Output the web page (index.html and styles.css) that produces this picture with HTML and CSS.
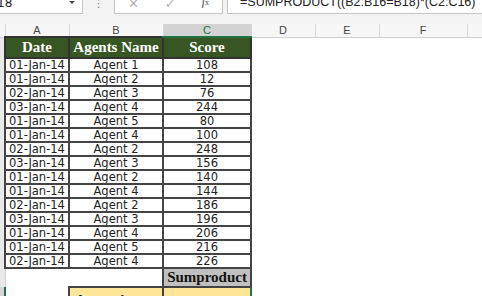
FILE: index.html
```html
<!DOCTYPE html>
<html lang="en">
<head>
  <meta charset="UTF-8">
  <title>Sumproduct</title>
  <link rel="stylesheet" href="styles.css">
</head>
<body>

  <!-- formula bar -->
  <div class="formula-bar">
    <div class="name-box">
      <span class="name-value">18</span>
      <span class="name-arrow"></span>
    </div>
    <div class="bar-dots">&#8942;</div>
    <div class="bar-buttons">
      <span class="btn-x">&#10005;</span>
      <span class="btn-ok">&#10003;</span>
      <span class="btn-fx"><i>f</i><small>x</small></span>
    </div>
    <div class="formula-input">=SUMPRODUCT((B2:B16=B18)*(C2:C16)</div>
  </div>
  <div class="bar-gap"></div>

  <table class="sheet">
    <colgroup>
      <col class="c-rh"><col class="c-a"><col class="c-b"><col class="c-c">
      <col class="c-d"><col class="c-e"><col class="c-f"><col class="c-g">
    </colgroup>
    <tr class="col-heads">
      <td class="rh"></td>
      <td>A</td><td>B</td><td class="col-sel">C</td>
      <td>D</td><td>E</td><td>F</td><td></td>
    </tr>
    <tr class="row-title">
      <td class="rh"></td>
      <td class="title">Date</td>
      <td class="title">Agents Name</td>
      <td class="title">Score</td>
      <td></td><td></td><td></td><td></td>
    </tr>
    <tr class="row-data"><td class="rh"></td><td class="d">01-Jan-14</td><td class="d m">Agent 1</td><td class="d m">108</td><td></td><td></td><td></td><td></td></tr>
    <tr class="row-data"><td class="rh"></td><td class="d">01-Jan-14</td><td class="d m">Agent 2</td><td class="d m">12</td><td></td><td></td><td></td><td></td></tr>
    <tr class="row-data"><td class="rh"></td><td class="d">02-Jan-14</td><td class="d m">Agent 3</td><td class="d m">76</td><td></td><td></td><td></td><td></td></tr>
    <tr class="row-data"><td class="rh"></td><td class="d">03-Jan-14</td><td class="d m">Agent 4</td><td class="d m">244</td><td></td><td></td><td></td><td></td></tr>
    <tr class="row-data"><td class="rh"></td><td class="d">01-Jan-14</td><td class="d m">Agent 5</td><td class="d m">80</td><td></td><td></td><td></td><td></td></tr>
    <tr class="row-data"><td class="rh"></td><td class="d">01-Jan-14</td><td class="d m">Agent 4</td><td class="d m">100</td><td></td><td></td><td></td><td></td></tr>
    <tr class="row-data"><td class="rh"></td><td class="d">02-Jan-14</td><td class="d m">Agent 2</td><td class="d m">248</td><td></td><td></td><td></td><td></td></tr>
    <tr class="row-data"><td class="rh"></td><td class="d">03-Jan-14</td><td class="d m">Agent 3</td><td class="d m">156</td><td></td><td></td><td></td><td></td></tr>
    <tr class="row-data"><td class="rh"></td><td class="d">01-Jan-14</td><td class="d m">Agent 2</td><td class="d m">140</td><td></td><td></td><td></td><td></td></tr>
    <tr class="row-data"><td class="rh"></td><td class="d">01-Jan-14</td><td class="d m">Agent 4</td><td class="d m">144</td><td></td><td></td><td></td><td></td></tr>
    <tr class="row-data"><td class="rh"></td><td class="d">02-Jan-14</td><td class="d m">Agent 2</td><td class="d m">186</td><td></td><td></td><td></td><td></td></tr>
    <tr class="row-data"><td class="rh"></td><td class="d">03-Jan-14</td><td class="d m">Agent 3</td><td class="d m">196</td><td></td><td></td><td></td><td></td></tr>
    <tr class="row-data"><td class="rh"></td><td class="d">01-Jan-14</td><td class="d m">Agent 4</td><td class="d m">206</td><td></td><td></td><td></td><td></td></tr>
    <tr class="row-data"><td class="rh"></td><td class="d">01-Jan-14</td><td class="d m">Agent 5</td><td class="d m">216</td><td></td><td></td><td></td><td></td></tr>
    <tr class="row-data"><td class="rh"></td><td class="d">02-Jan-14</td><td class="d m">Agent 4</td><td class="d m">226</td><td></td><td></td><td></td><td></td></tr>
    <tr class="row-sum">
      <td class="rh"></td><td></td><td></td>
      <td class="sum-label">Sumproduct</td>
      <td></td><td></td><td></td><td></td>
    </tr>
    <tr class="row-result">
      <td class="rh rh-sel"></td><td></td>
      <td class="pick">Agent 4</td>
      <td class="pick result"></td>
      <td></td><td></td><td></td><td></td>
    </tr>
  </table>

</body>
</html>
```

FILE: styles.css
```css
body {
  margin: 0;
  background: #ffffff;
  overflow: hidden;
  height: 296px;
  font-family: "DejaVu Sans", sans-serif;
}

/* formula bar */
.formula-bar {
  height: 14px;
  display: flex;
  background: #f3f3f3;
  overflow: hidden;
}

.name-box {
  width: 82px;
  background: #fff;
  border-right: 1px solid #c6c6c6;
  border-bottom: 1px solid #c6c6c6;
  display: flex;
  justify-content: space-between;
  align-items: flex-end;
  overflow: hidden;
}

.name-value {
  font-size: 12px;
  line-height: 12px;
  margin-left: -3px;
  margin-bottom: 4px;
  color: #222;
}

.name-arrow { /* little dropdown triangle */
  width: 0;
  height: 0;
  border-left: 3px solid transparent;
  border-right: 3px solid transparent;
  border-top: 3px solid #444;
  margin: 0 7px 9px 0;
}

.bar-dots {
  width: 31px;
  text-align: center;
  font-size: 11px;
  line-height: 8px;
  color: #777;
}

.bar-buttons {
  width: 107px;
  background: #fff;
  border: 1px solid #c6c6c6;
  border-top: none;
  display: flex;
  justify-content: space-around;
  align-items: flex-end;
  color: #b4b4b4;
  overflow: hidden;
}

.btn-x, .btn-ok {
  font-size: 13px;
  line-height: 13px;
  margin-bottom: 3px;
}

.btn-fx {
  font-family: "Liberation Serif", serif;
  font-size: 12px;
  line-height: 12px;
  color: #444;
  margin-bottom: 4px;
}

.btn-fx small {
  font-size: 8px;
}

.formula-input {
  flex: 1;
  margin-left: 4px;
  background: #fff;
  border-left: 1px solid #c6c6c6;
  border-bottom: 1px solid #c6c6c6;
  font-family: "Liberation Sans", sans-serif;
  font-size: 12.5px;
  line-height: 14px;
  padding-left: 12px;
  white-space: nowrap;
  overflow: hidden;
  color: #222;
  margin-top: -5px;
}

.bar-gap {
  height: 10px;
  background: #f3f3f3;
}

/* sheet grid */
.sheet {
  border-collapse: collapse;
  table-layout: fixed;
  width: 482px;
}

.c-rh { width: 5px; }
.c-a { width: 64px; }
.c-b { width: 94px; }
.c-c { width: 88px; }
.c-d { width: 64px; }
.c-e { width: 64px; }
.c-f { width: 88px; }
.c-g { width: 15px; }

.sheet td {
  padding: 0;
  white-space: nowrap;
  overflow: hidden;
}

.rh {
  background: #e9e9e9;
  border-right: 1px solid #cfcfcf;
}

.rh-sel {
  border-right: 2px solid #217346;
  background: #d6d6d6;
}

.col-heads td {
  height: 12px;
  background: #f7f7f7;
  border-right: 1px solid #d8d8d8;
  border-bottom: 1px solid #cfcfcf;
  font-family: "Liberation Sans", sans-serif;
  font-size: 11px;
  line-height: 12px;
  text-align: center;
  color: #444;
}

.col-heads td.col-sel {
  background: #d3d3d3;
  color: #217346;
  border-bottom: 2px solid #217346;
}

.row-title td { height: 19px; }

.title {
  background: #375623;
  color: #fff;
  font-family: "Liberation Serif", serif;
  font-weight: bold;
  font-size: 15px;
  line-height: 15px;
  text-align: center;
  border: 2px solid #333;
}

.row-data td { height: 12px; }

.d {
  border: 2px solid #444;
  font-size: 11.5px;
  line-height: 12px;
  color: #222;
  padding-left: 3px !important;
}

.d.m {
  text-align: center;
  padding-left: 0 !important;
}

.row-sum td { height: 17px; }

.sum-label {
  background: #c0c0c0;
  border: 2px solid #444;
  font-family: "Liberation Serif", serif;
  font-weight: bold;
  font-size: 15px;
  line-height: 15px;
  text-align: center;
  color: #111;
}

.row-result td {
  height: 20px;
  vertical-align: top;
}

.pick {
  background: #ffe699;
  border: 2px solid #444;
  font-family: "Liberation Serif", serif;
  font-weight: bold;
  font-size: 15px;
  line-height: 15px;
  padding: 5px 0 0 5px !important;
  color: #111;
}

.pick.result {
  border: 2px solid #217346;
}
```
